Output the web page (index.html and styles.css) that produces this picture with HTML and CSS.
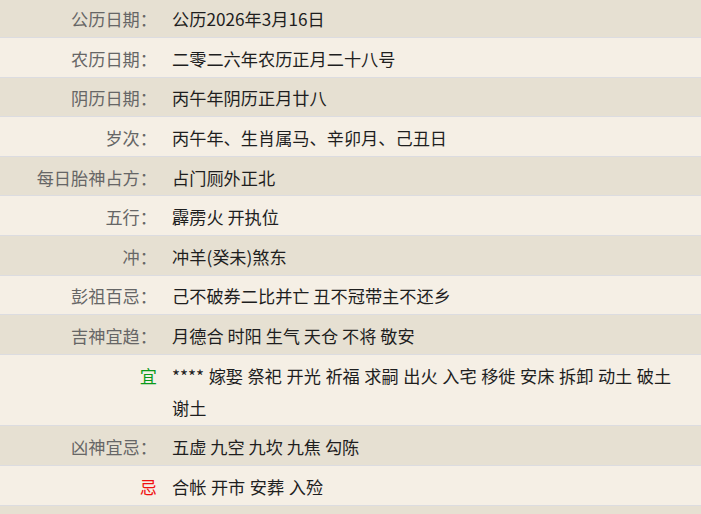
FILE: index.html
```html
<!DOCTYPE html>
<html lang="zh-CN">
<head>
<meta charset="utf-8">
<title>黄历</title>
<link rel="stylesheet" href="styles.css">
</head>
<body>
<div class="almanac">
  <div class="row dark"><div class="label">公历日期：</div><div class="value">公历2026年3月16日</div></div>
  <div class="row light"><div class="label">农历日期：</div><div class="value">二零二六年农历正月二十八号</div></div>
  <div class="row dark"><div class="label">阴历日期：</div><div class="value">丙午年阴历正月廿八</div></div>
  <div class="row light"><div class="label">岁次：</div><div class="value">丙午年、生肖属马、辛卯月、己丑日</div></div>
  <div class="row dark"><div class="label">每日胎神占方：</div><div class="value">占门厕外正北</div></div>
  <div class="row light"><div class="label">五行：</div><div class="value">霹雳火 开执位</div></div>
  <div class="row dark"><div class="label">冲：</div><div class="value">冲羊(癸未)煞东</div></div>
  <div class="row light"><div class="label">彭祖百忌：</div><div class="value">己不破券二比并亡 丑不冠带主不还乡</div></div>
  <div class="row dark"><div class="label">吉神宜趋：</div><div class="value">月德合 时阳 生气 天仓 不将 敬安</div></div>
  <div class="row light"><div class="label good">宜</div><div class="value words">**** 嫁娶 祭祀 开光 祈福 求嗣 出火 入宅 移徙 安床 拆卸 动土 破土 谢土</div></div>
  <div class="row dark"><div class="label">凶神宜忌：</div><div class="value">五虚 九空 九坎 九焦 勾陈</div></div>
  <div class="row light"><div class="label bad">忌</div><div class="value words">合帐 开市 安葬 入殓</div></div>
  <div class="row dark"><div class="label">&nbsp;</div><div class="value">&nbsp;</div></div>
</div>
</body>
</html>
```
FILE: styles.css
```css
html, body {
  margin: 0;
  padding: 0;
  overflow: hidden;
  background: #f5efe5;
}
body {
  font-family: "Noto Sans CJK SC", "Noto Sans", sans-serif;
  font-size: 17.2px;
}
.almanac {
  margin-top: -1.6px;
}
.row {
  display: flex;
  gap: 15px;
  padding: 4.8px 0 1.8px;
  line-height: 32px;
  border-bottom: 1px solid #dcdce0;
}
.dark { background: #e6e0d2; }
.light { background: #f5efe5; }
.label {
  flex: 0 0 157px;
  text-align: right;
  color: #666;
}
.value {
  flex: 1;
  color: #1e1e1e;
  padding-right: 14px;
}
.words {
  word-break: keep-all;
  word-spacing: 0.7px;
}
.good { color: #0a9a1a; }
.bad { color: #f01010; }
```
